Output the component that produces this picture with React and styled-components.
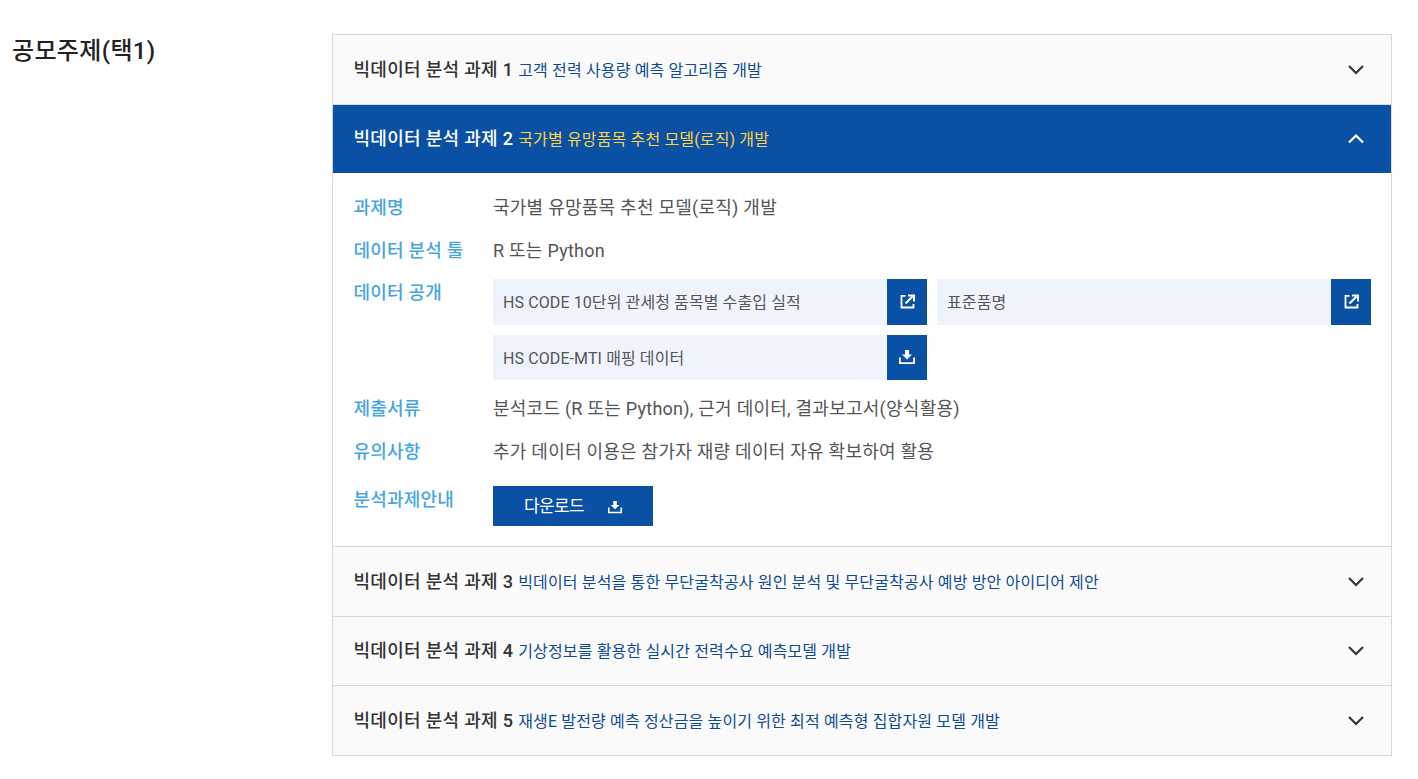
import React from 'react'
import styled, { createGlobalStyle } from 'styled-components'

const GlobalStyle = createGlobalStyle`
  html, body {
    margin: 0;
    padding: 0;
    background: #fff;
    font-family: Roboto, "Noto Sans CJK KR", sans-serif;
    overflow: hidden;
  }
  * { box-sizing: border-box; }
`

const tasks = [
  { num: 1, desc: '고객 전력 사용량 예측 알고리즘 개발', height: 70 },
  { num: 2, desc: '국가별 유망품목 추천 모델(로직) 개발', height: 69, open: true },
  { num: 3, desc: '빅데이터 분석을 통한 무단굴착공사 원인 분석 및 무단굴착공사 예방 방안 아이디어 제안', height: 70 },
  { num: 4, desc: '기상정보를 활용한 실시간 전력수요 예측모델 개발', height: 69 },
  { num: 5, desc: '재생E 발전량 예측 정산금을 높이기 위한 최적 예측형 집합자원 모델 개발', height: 70 },
]

const Chevron = ({ up }) => (
  <svg width="18" height="18" viewBox="0 0 18 18" fill="none" stroke="currentColor" strokeWidth="2.2">
    <path d={up ? 'M2 12.5 9 5.5l7 7' : 'M2 5 9 12l7-7'} />
  </svg>
)

const LinkIcon = () => (
  <svg width="15" height="15" viewBox="0 0 15 15" fill="none" stroke="currentColor" strokeWidth="1.8">
    <path d="M5.5 1.9H1.5v11.6h12V10" />
    <path d="M5.5 9.5 12.5 2.5" strokeWidth="2.2" />
    <path d="M8 1.4h6v6" strokeWidth="2" />
  </svg>
)

const DownloadIcon = ({ size = 16 }) => (
  <svg width={size} height={(size * 14) / 16} viewBox="0 0 16 14" fill="currentColor">
    <path d="M6 0h4v4.5h3L8 9.5 3 4.5h3z" />
    <path d="M0 7.5h1.8v4.7h12.4V7.5H16V14H0z" />
  </svg>
)

const App = () => (
  <Page>
    <GlobalStyle />
    <Title>공모주제(택1)</Title>
    <Accordion>
      {tasks.map((t) => (
        <Item key={t.num}>
          <Header $open={t.open} $height={t.height}>
            <HeaderText>
              <TaskNo $open={t.open}>빅데이터 분석 과제 {t.num}</TaskNo>
              <TaskDesc $open={t.open}>{t.desc}</TaskDesc>
            </HeaderText>
            <Arrow $open={t.open}><Chevron up={t.open} /></Arrow>
          </Header>
          {t.open && (
            <Body>
              <Row>
                <Label>과제명</Label>
                <Value>국가별 유망품목 추천 모델(로직) 개발</Value>
              </Row>
              <Row>
                <Label>데이터 분석 툴</Label>
                <Value>R 또는 Python</Value>
              </Row>
              <FileRow>
                <Label>데이터 공개</Label>
                <FileGrid>
                  <FileLink>
                    <FileName>HS CODE 10단위 관세청 품목별 수출입 실적</FileName>
                    <IconBox><LinkIcon /></IconBox>
                  </FileLink>
                  <FileLink>
                    <FileName>표준품명</FileName>
                    <IconBox><LinkIcon /></IconBox>
                  </FileLink>
                  <FileLink>
                    <FileName>HS CODE-MTI 매핑 데이터</FileName>
                    <IconBox><DownloadIcon /></IconBox>
                  </FileLink>
                </FileGrid>
              </FileRow>
              <Row>
                <Label>제출서류</Label>
                <Value>분석코드 (R 또는 Python), 근거 데이터, 결과보고서(양식활용)</Value>
              </Row>
              <Row>
                <Label>유의사항</Label>
                <Value>추가 데이터 이용은 참가자 재량 데이터 자유 확보하여 활용</Value>
              </Row>
              <ButtonRow>
                <Label>분석과제안내</Label>
                <DownloadButton>
                  <ButtonText>다운로드</ButtonText>
                  <ButtonIcon><DownloadIcon size={14} /></ButtonIcon>
                </DownloadButton>
              </ButtonRow>
            </Body>
          )}
        </Item>
      ))}
    </Accordion>
  </Page>
)

const Page = styled.div`
  display: flex;
  align-items: flex-start;
  width: 1418px;
  height: 779px;
  padding: 34px 0 0 12px;
`

const Title = styled.h2`
  width: 320px;
  margin: 0;
  font-size: 24px;
  line-height: 34px;
  font-weight: 500;
  letter-spacing: 0.35px;
  color: #222;
`

const Accordion = styled.div`
  width: 1060px;
  border: 1px solid #d9d9d9;
`

const Item = styled.div`
  & + & {
    border-top: 1px solid #d9d9d9;
  }
`

const Header = styled.div`
  display: flex;
  align-items: center;
  justify-content: space-between;
  height: ${(p) => p.$height - 1}px;
  padding: 0 26px 0 20.5px;
  background: ${(p) => (p.$open ? '#0a50a4' : '#fafafa')};
`

const HeaderText = styled.div`
  display: flex;
  align-items: baseline;
  gap: 5px;
  margin-bottom: 4px;
`

const TaskNo = styled.span`
  font-size: 18px;
  font-weight: 500;
  letter-spacing: 0.3px;
  color: ${(p) => (p.$open ? '#fff' : '#333')};
`

const TaskDesc = styled.span`
  font-size: 16px;
  letter-spacing: 0.15px;
  color: ${(p) => (p.$open ? '#ffd23f' : '#0f4a94')};
`

const Arrow = styled.span`
  display: flex;
  color: ${(p) => (p.$open ? '#fff' : '#333')};
`

const Body = styled.div`
  padding: 13px 20px 20px 20.5px;
`

const Row = styled.div`
  display: flex;
  align-items: center;
  height: 43px;
`

const FileRow = styled.div`
  display: flex;
  align-items: flex-start;
  padding-top: 7px;
`

const ButtonRow = styled.div`
  display: flex;
  align-items: flex-start;
  margin-top: 13px;
`

const Label = styled.div`
  flex: 0 0 139.5px;
  font-size: 18px;
  line-height: 28px;
  font-weight: 500;
  letter-spacing: 0.2px;
  color: #45a5e0;
`

const Value = styled.div`
  font-size: 18px;
  line-height: 28px;
  letter-spacing: 0.25px;
  color: #555;
`

const FileGrid = styled.div`
  display: grid;
  grid-template-columns: 434px 434px;
  grid-auto-rows: 45.5px;
  gap: 10px;
  margin-bottom: 7px;
`

const FileLink = styled.div`
  display: flex;
  align-items: stretch;
  background: #eff4fc;
`

const FileName = styled.span`
  flex: 1;
  display: flex;
  align-items: center;
  padding: 0 0 1px 10px;
  font-size: 16px;
  letter-spacing: 0.1px;
  color: #555;
`

const IconBox = styled.span`
  flex: 0 0 40px;
  display: flex;
  align-items: center;
  justify-content: center;
  background: #0a50a4;
  color: #fff;
`

const DownloadButton = styled.button`
  display: flex;
  align-items: center;
  justify-content: center;
  gap: 24px;
  width: 160px;
  height: 40px;
  border: 0;
  padding: 0;
  background: #0a50a4;
  color: #fff;
  font-family: inherit;
  font-size: 17px;
  letter-spacing: -0.6px;
`

const ButtonText = styled.span`
  margin-bottom: 3px;
`

const ButtonIcon = styled.span`
  display: flex;
  margin-top: 3px;
`

export default App
